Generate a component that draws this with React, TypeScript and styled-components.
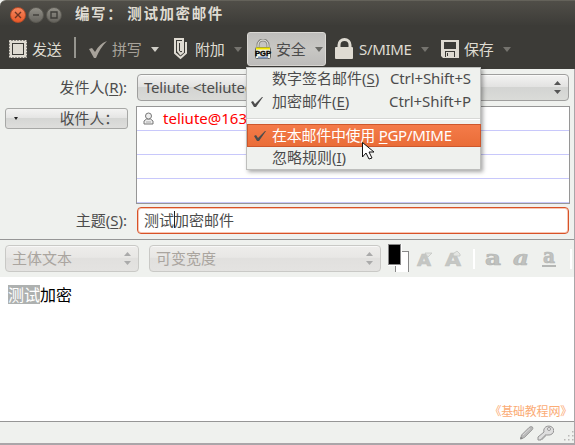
import React from "react";
import styled, { createGlobalStyle, css } from "styled-components";

const Global = createGlobalStyle`
  * { box-sizing: border-box; }
  html, body { margin: 0; padding: 0; overflow: hidden; background: #eff1ee; }
  body { font-family: "Noto Sans", "Noto Sans CJK SC", sans-serif; font-size: 15px; color: #4c4c4c; }
`;

const Window = styled.main`
  position: relative;
  width: 575px;
  height: 445px;
  display: flex;
  flex-direction: column;
  background: #eff1ee;
  white-space: nowrap;
  overflow: hidden;
`;

const TitleBar = styled.header`
  height: 25px;
  flex: none;
  display: flex;
  align-items: center;
  gap: 2px;
  padding: 4px 0 0 10px;
  border-top: 1px solid #64625a;
  border-radius: 6px 0 0 0;
  background: linear-gradient(#504e48, #3d3c38);
`;

const WindowButton = styled.span<{ $close?: boolean }>`
  width: 16px;
  height: 16px;
  border-radius: 50%;
  border: 1px solid ${(p) => (p.$close ? "#b74b27" : "#5b5952")};
  background: ${(p) => (p.$close ? "linear-gradient(#f58860, #e95a29)" : "linear-gradient(#918f87, #66645e)")};
  svg { display: block; }
`;

const Title = styled.h1<{ $indent: number }>`
  margin: -5px 0 0 ${(p) => p.$indent}px;
  font: bold 14.5px/20px "Noto Sans CJK SC", sans-serif;
  letter-spacing: 1.6px;
  color: #dfdbd2;
`;

const ToolBar = styled.nav`
  height: 44px;
  flex: none;
  display: flex;
  align-items: center;
  background: #3c3b37;
  color: #dfdbd2;
`;

const ToolButton = styled.div<{ $width: number; $pad: number; $gap: number; $active?: boolean; $muted?: boolean }>`
  width: ${(p) => p.$width}px;
  height: 34px;
  display: flex;
  align-items: center;
  padding: 4px 0 0 ${(p) => p.$pad}px;
  gap: ${(p) => p.$gap}px;
  color: ${(p) => (p.$muted ? "#a7a29a" : "#dfdbd2")};
  ${(p) =>
    p.$active &&
    css`
      margin-top: 4px;
      padding-top: 0;
      padding-bottom: 0;
      color: #4c4c4c;
      border: 1px solid #dad8d4;
      border-radius: 3px;
      background: linear-gradient(#bfbebc, #c8c7c4 50%, #bdbcba);
    `}
  svg { flex: none; display: block; }
`;

const ToolLabel = styled.span<{ $width: number }>`
  width: ${(p) => p.$width}px;
  line-height: 20px;
  font-size: 15px;
  letter-spacing: -0.3px;
`;

const Arrow = styled.i<{ $color: string; $size?: number }>`
  width: 0;
  height: 0;
  border-left: ${(p) => p.$size || 4}px solid transparent;
  border-right: ${(p) => p.$size || 4}px solid transparent;
  border-top: ${(p) => (p.$size || 4) + 1}px solid ${(p) => p.$color};
`;

const Divider = styled.span<{ $color: string; $height: number }>`
  width: 2px;
  height: ${(p) => p.$height}px;
  background: ${(p) => p.$color};
`;

const Compose = styled.section`
  flex: 1;
  display: flex;
  flex-direction: column;
  border-right: 1px solid #aaa6a9;
  border-bottom: 2px solid #aaa6a9;
  min-height: 0;
`;

const Fields = styled.div`
  height: 171px;
  flex: none;
  display: grid;
  grid-template-columns: 123px 434px;
  grid-template-rows: 27px 98px 27px;
  column-gap: 8px;
  row-gap: 4px;
  padding: 5px 0 0 5px;
  border-bottom: 1px solid #969696;
`;

const Label = styled.label`
  align-self: center;
  text-align: right;
  padding: 0 1px 1px 0;
  font-size: 15px;
  line-height: 20px;
`;

const Mnemonic = styled.span`
  text-decoration: underline;
  text-decoration-thickness: 1px;
  text-underline-offset: 2px;
`;

const Select = styled.div<{ $width: number; $disabled?: boolean }>`
  width: ${(p) => p.$width}px;
  height: 27px;
  flex: none;
  display: flex;
  align-items: center;
  justify-content: space-between;
  padding: 0 7px 1px 6px;
  border: 1px solid ${(p) => (p.$disabled ? "#c9c9c6" : "#9f9f9e")};
  border-radius: 4px;
  color: ${(p) => (p.$disabled ? "#aaa59f" : "#4c4c4c")};
  background: ${(p) =>
    p.$disabled
      ? "linear-gradient(#eeedeb, #e8e7e5 45%, #e1e0de 50%, #e4e3e1)"
      : "linear-gradient(#f3f3f2, #e3e3e2 46%, #d3d4d2 50%, #dadbd8)"};
  box-shadow: inset 0 1px rgba(255, 255, 255, 0.6);
  font-size: 15px;
  letter-spacing: ${(p) => (p.$disabled ? "0" : "-0.2px")};
  line-height: 20px;
`;

const SelectField = styled.div`
  padding-left: 1px;
`;

const RecipientButton = styled.button`
  width: 123px;
  height: 21px;
  margin: 3px 0 0;
  padding: 0 8px 1px 8px;
  display: flex;
  align-items: center;
  justify-content: space-between;
  color: #4c4c4c;
  font: 14.8px/18px "Noto Sans CJK SC", sans-serif;
  border: 1px solid #a7a8a6;
  border-radius: 3px;
  background: linear-gradient(#f3f3f2, #e5e5e4 46%, #d5d6d4 50%, #dededc);
`;

const AddressList = styled.div`
  margin-top: 1px;
  height: 98px;
  border: 1px solid #969696;
  border-bottom-width: 2px;
  background: #fff;
`;

const AddressRow = styled.div`
  height: 24px;
  display: flex;
  align-items: center;
  gap: 9px;
  padding: 0 0 1px 6px;
  border-bottom: 1px solid #c8c8fb;
  color: #f00;
  font-size: 15px;
  line-height: 20px;
`;

const SubjectInput = styled.div`
  width: 432px;
  height: 27px;
  margin: 0 0 0 1px;
  display: flex;
  align-items: center;
  padding: 0 6px 3px;
  border: 1px solid #d85228;
  border-radius: 4px;
  box-shadow: inset 0 0 0 1px #f6c6b3;
  background: #fff;
  font-size: 15px;
`;

const Caret = styled.i`
  width: 1px;
  height: 17px;
  margin: 0 -1px 0 0;
  background: #222;
`;

const FormatBar = styled.div`
  height: 37px;
  flex: none;
  display: flex;
  align-items: center;
  padding: 0 0 0 5px;
  gap: 10px;
`;

const FormatTools = styled.div`
  display: flex;
  align-items: center;
  height: 37px;
  margin-left: -3px;
`;

const FormatButton = styled.div<{ $width: number; $pad?: number }>`
  width: ${(p) => p.$width}px;
  padding-left: ${(p) => p.$pad || 0}px;
  svg { display: block; overflow: visible; }
`;

const Editor = styled.article`
  position: relative;
  height: 144px;
  flex: none;
  padding: 8px;
  background: #fff;
  color: #000;
  font: 16px/19px "Noto Sans CJK SC", sans-serif;
`;

const Selection = styled.mark`
  display: inline-block;
  height: 19px;
  color: #fff;
  background: #aeb1b0;
`;

const Watermark = styled.span`
  position: absolute;
  right: 2px;
  bottom: 1px;
  font: 12px/18px "Noto Sans CJK SC", sans-serif;
  letter-spacing: -0.2px;
  color: #fbac76;
`;

const StatusBar = styled.footer`
  flex: 1;
  display: flex;
  align-items: center;
  justify-content: flex-end;
  gap: 3px;
  border-top: 1px solid #969696;
  svg { display: block; }
  svg:last-child { margin: 6px 0 0 4px; }
`;

const Menu = styled.div`
  position: absolute;
  left: 246px;
  top: 67px;
  width: 235px;
  height: 103px;
  border: 1px solid #bebfbd;
  background: #eff1ee;
  box-shadow: 2px 2px 4px rgba(0, 0, 0, 0.35);
`;

const MenuItem = styled.div<{ $selected?: boolean }>`
  height: 23px;
  display: grid;
  grid-template-columns: 25px 1fr auto;
  align-items: center;
  padding: 0 9px 3px 0;
  font-size: 15px;
  line-height: 20px;
  svg { margin: 2px 0 0 4px; }
  ${(p) =>
    p.$selected &&
    css`
      margin-right: -1px;
      color: #fff;
      border: 1px solid #cd572c;
      grid-template-columns: 24px 1fr auto;
      letter-spacing: -0.28px;
      background: linear-gradient(#f47b49, #ea6d38);
      svg { margin-left: 6px; }
    `}
`;

const Shortcut = styled.span`
  letter-spacing: -0.1px;
`;

const MenuRule = styled.hr`
  height: 2px;
  margin: 4px 0;
  border: 0;
  border-top: 1px solid #d8d9d7;
  border-bottom: 1px solid #fff;
`;

const Pointer = styled.svg`
  position: absolute;
  left: 361px;
  top: 141px;
`;

const Stepper = ({ color }: { color: string }) => (
  <svg width="7" height="14" fill={color}>
    <path d="M0 5h7L3.5 1zM0 10h7L3.5 14z" />
  </svg>
);

const Tick = () => (
  <svg width="13" height="12" viewBox="0 0 13 12">
    <path d="M0 6 2 5 4 8 11 1 12 1 5 11 3 11Z" fill="#4c4c4c" />
  </svg>
);

const StampIcon = () => (
  <svg width="18" height="18" viewBox="0 0 18 18">
    <rect x="1" y="1" width="16" height="16" fill="#dfdbd2" />
    <rect x=".5" y=".5" width="17" height="17" fill="none" stroke="#dfdbd2" strokeDasharray="2 1" />
    <rect x="3.5" y="3.5" width="11" height="11" fill="#dfdbd2" stroke="#3c3b37" />
  </svg>
);

const SpellIcon = () => (
  <svg width="18" height="18" viewBox="0 0 18 18">
    <path d="M0 9 3 8 6 12Q10 4 18 1Q11 8 7 18H5Z" fill="#a7a29a" />
  </svg>
);

const ClipIcon = () => (
  <svg width="13" height="22" viewBox="0 0 13 22" fill="none" stroke="#dfdbd2" strokeWidth="2">
    <path d="M9 4V1H1V15L6.5 20 12 15V4M9 4V14L6.5 16 4 13V4H7V13" />
  </svg>
);

const LockIcon = () => (
  <svg width="19" height="22" viewBox="0 0 19 22">
    <path d="M4 12V7a5.5 5.5 0 0 1 11 0v5" fill="none" stroke="#dfdbd2" strokeWidth="3" />
    <rect y="9" width="18" height="12" rx="1" fill="#dfdbd2" />
  </svg>
);

const PgpIcon = () => (
  <svg width="18" height="21" viewBox="0 0 18 21">
    <path d="M4 10V6a5 5 0 0 1 10 0v4" fill="none" stroke="#858580" strokeWidth="3" />
    <path d="M4 9V6a5 5 0 0 1 10 0v3" fill="none" stroke="#f1f1e9" />
    <rect x="1.5" y="8.5" width="15" height="11" rx="1" fill="#f4f4e7" stroke="#666862" />
    <path d="M2 9.5H16" stroke="#f3e800" strokeWidth="2" />
    <path d="M4 18.5H14" stroke="#829ac3" strokeWidth="2" />
    <text x="1" y="17" fontFamily="Liberation Sans" fontSize="7" fontWeight="bold" textLength="16" lengthAdjust="spacingAndGlyphs" fill="#080808" stroke="#080808" strokeWidth=".4">PGP</text>
  </svg>
);

const DiskIcon = () => (
  <svg width="18" height="18" viewBox="0 0 18 18">
    <path d="M0 0H18V18H2L0 16Z" fill="#dfdbd2" />
    <path d="M3 2H15V9H3ZM4 11H14V17H4Z" fill="#3c3b37" />
    <path d="M5 12H13V17H5Z" fill="#dfdbd2" />
    <path d="M6.5 13V16" stroke="#3c3b37" />
  </svg>
);

const PersonIcon = () => (
  <svg width="11" height="13" viewBox="0 0 11 13" fill="#eee" stroke="#777">
    <path d="M1 12V9L3.5 7H7.5L10 9V12Z" />
    <circle cx="5.5" cy="4" r="3" />
    <path d="M3 10H8" stroke="#aaa" />
  </svg>
);

const Swatches = () => (
  <svg width="20" height="29" viewBox="0 0 20 29">
    <rect x="7.5" y="7.5" width="13" height="20" fill="#fff" stroke="#888" />
    <rect width="14" height="22" fill="#fff" />
    <rect x=".5" y=".5" width="12" height="20" fill="#000" stroke="#888" />
    <path d="M8 27.5H20M19.5 8V28" stroke="#fff" />
  </svg>
);

const SizeIcon = ({ larger }: { larger?: boolean }) => (
  <svg width="17" height="18" viewBox="0 0 17 18">
    <text x="0" y="15.5" fontFamily="DejaVu Sans" fontSize={larger ? 18 : 16} fontWeight="bold" textLength={larger ? 16 : 14} lengthAdjust="spacingAndGlyphs" fill="#c5c7c4" stroke="#c0c2bf" strokeWidth=".6">A</text>
    <path d={larger ? "M8 4 12 1 15 4V6H9Z" : "M8 3H15L11 7Z"} fill="#e4e6e3" stroke="#c4c6c3" strokeWidth=".8" />
  </svg>
);

const StyleIcon = ({ italic, underline }: { italic?: boolean; underline?: boolean }) => (
  <svg width="17" height="20" viewBox="0 0 17 20">
    <text x={underline ? 2 : 0} y={underline ? 14 : 16} fontFamily="DejaVu Serif" fontSize="20" fontWeight="bold" fontStyle={italic ? "italic" : "normal"} textLength={underline ? 12 : 16} lengthAdjust="spacingAndGlyphs" fill="#c0c2bf" stroke="#b5b7b5" strokeWidth=".7">a</text>
    {underline && <path d="M1 17H15" stroke="#b5b7b5" strokeWidth="2" />}
  </svg>
);

const PencilIcon = () => (
  <svg width="15" height="16" viewBox="0 0 15 16" stroke="#929292" strokeWidth=".8">
    <path d="M1.5 14 2.5 10 10 2.5Q12 .8 13.5 2Q14.5 3.5 13 5L5.5 12.5Z" fill="#b9b9b9" />
    <path d="M4 10 11 3.5" stroke="#e1e1e1" />
    <path d="M1.5 14 2 12 3.5 13.4Z" fill="#666" />
  </svg>
);

const KeyIcon = () => (
  <svg width="17" height="17" viewBox="0 0 17 17">
    <path d="M7 8A5 4.5 0 1 1 11 11L8 11V13H6V15H4V16H1V13Z" fill="#dedede" stroke="#949494" />
    <circle cx="12" cy="5" r="1.5" fill="#f6f6f6" stroke="#999" />
  </svg>
);

const ResizeGrip = () => (
  <svg width="13" height="14" fill="#b9b8b6">
    <path d="M11 2h1.5v1.5h-1.5zM7 6h1.5v1.5h-1.5zM11 6h1.5v1.5h-1.5zM3 10h1.5v1.5h-1.5zM7 10h1.5v1.5h-1.5zM11 10h1.5v1.5h-1.5z" />
  </svg>
);

export default function App() {
  return (
    <>
      <Global />
      <Window>
        <TitleBar>
          <WindowButton $close><svg width="14" height="14" stroke="#6c3524" strokeWidth="1.4"><path d="M4 4 10 10M10 4 4 10" /></svg></WindowButton>
          <WindowButton><svg width="14" height="14" stroke="#3e3d39" strokeWidth="1.4"><path d="M4 7H10" /></svg></WindowButton>
          <WindowButton><svg width="14" height="14" stroke="#3e3d39" strokeWidth="1.4" fill="none"><path d="M4 4H10V10H4Z" /></svg></WindowButton>
          <Title $indent={11}>编写：</Title>
          <Title $indent={2}>测试加密邮件</Title>
        </TitleBar>

        <ToolBar>
          <ToolButton $width={74} $pad={9} $gap={5}><StampIcon /><ToolLabel $width={31}>发送</ToolLabel></ToolButton>
          <Divider $color="#96958f" $height={21} />
          <ToolButton $width={98} $pad={13} $gap={5} $muted><SpellIcon /><ToolLabel $width={34}>拼写</ToolLabel><Arrow $color="#d0cec7" /></ToolButton>
          <ToolButton $width={73} $pad={0} $gap={8}><ClipIcon /><ToolLabel $width={31}>附加</ToolLabel><Arrow $color="#75736e" /></ToolButton>
          <ToolButton $width={79} $pad={6} $gap={4} $active><PgpIcon /><ToolLabel $width={35}>安全</ToolLabel><Arrow $color="#696965" /></ToolButton>
          <ToolButton $width={115} $pad={9} $gap={5}><LockIcon /><ToolLabel $width={57}>S/MIME</ToolLabel><Arrow $color="#75736e" /></ToolButton>
          <ToolButton $width={80} $pad={0} $gap={5}><DiskIcon /><ToolLabel $width={34}>保存</ToolLabel><Arrow $color="#75736e" /></ToolButton>
        </ToolBar>

        <Compose>
          <Fields>
            <Label>发件人(<Mnemonic>R</Mnemonic>):</Label>
            <SelectField><Select $width={432}><span>Teliute &lt;teliute@163</span><Stepper color="#555" /></Select></SelectField>
            <RecipientButton><Arrow $color="#222" $size={2} /><span>收件人：</span></RecipientButton>
            <AddressList>
              <AddressRow><PersonIcon /><span>teliute@163</span></AddressRow>
              <AddressRow /><AddressRow /><AddressRow />
            </AddressList>
            <Label>主题(<Mnemonic>S</Mnemonic>):</Label>
            <SubjectInput><span>测试</span><Caret /><span>加密邮件</span></SubjectInput>
          </Fields>

          <FormatBar>
            <Select $width={134} $disabled><span>主体文本</span><Stepper color="#aaa" /></Select>
            <Select $width={232} $disabled><span>可变宽度</span><Stepper color="#aaa" /></Select>
            <FormatTools>
              <FormatButton $width={29}><Swatches /></FormatButton>
              <FormatButton $width={28}><SizeIcon /></FormatButton>
              <FormatButton $width={28}><SizeIcon larger /></FormatButton>
              <Divider $color="#fff" $height={20} />
              <FormatButton $width={38} $pad={10}><StyleIcon /></FormatButton>
              <FormatButton $width={28}><StyleIcon italic /></FormatButton>
              <FormatButton $width={29}><StyleIcon underline /></FormatButton>
              <Divider $color="#fff" $height={20} />
            </FormatTools>
          </FormatBar>
          <Editor><Selection>测试</Selection>加密<Watermark>《基础教程网》</Watermark></Editor>
          <StatusBar><PencilIcon /><KeyIcon /><ResizeGrip /></StatusBar>
        </Compose>

        <Menu>
          <MenuItem><i /><span>数字签名邮件(<Mnemonic>S</Mnemonic>)</span><Shortcut>Ctrl+Shift+S</Shortcut></MenuItem>
          <MenuItem><Tick /><span>加密邮件(<Mnemonic>E</Mnemonic>)</span><Shortcut>Ctrl+Shift+P</Shortcut></MenuItem>
          <MenuRule />
          <MenuItem $selected><Tick /><span>在本邮件中使用 <Mnemonic>P</Mnemonic>GP/MIME</span></MenuItem>
          <MenuItem><i /><span>忽略规则(<Mnemonic>I</Mnemonic>)</span></MenuItem>
        </Menu>
        <Pointer width="14" height="20" viewBox="0 0 14 20"><path d="M1.5 1.5V16L5 12 8 18 11 17 8 11H13Z" fill="#fff" stroke="#111" /></Pointer>
      </Window>
    </>
  );
}
